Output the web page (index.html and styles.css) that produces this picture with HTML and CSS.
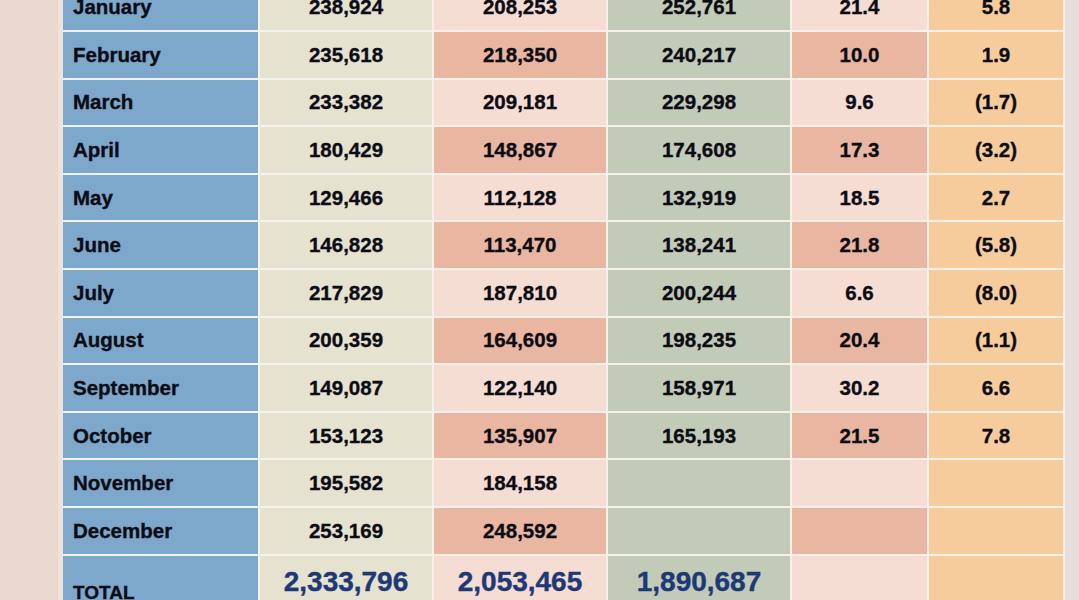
FILE: index.html
```html
<!DOCTYPE html>
<html>
<head>
<meta charset="utf-8">
<link rel="stylesheet" href="styles.css">
</head>
<body>
<div class="page">
  <div class="edge"></div>
  <div class="sheet">
    <div class="m">January</div><div class="c2">238,924</div><div class="c3 lt">208,253</div><div class="c4">252,761</div><div class="c5 lt">21.4</div><div class="c6">5.8</div>
    <div class="m">February</div><div class="c2">235,618</div><div class="c3 dk">218,350</div><div class="c4">240,217</div><div class="c5 dk">10.0</div><div class="c6">1.9</div>
    <div class="m">March</div><div class="c2">233,382</div><div class="c3 lt">209,181</div><div class="c4">229,298</div><div class="c5 lt">9.6</div><div class="c6">(1.7)</div>
    <div class="m">April</div><div class="c2">180,429</div><div class="c3 dk">148,867</div><div class="c4">174,608</div><div class="c5 dk">17.3</div><div class="c6">(3.2)</div>
    <div class="m">May</div><div class="c2">129,466</div><div class="c3 lt">112,128</div><div class="c4">132,919</div><div class="c5 lt">18.5</div><div class="c6">2.7</div>
    <div class="m">June</div><div class="c2">146,828</div><div class="c3 dk">113,470</div><div class="c4">138,241</div><div class="c5 dk">21.8</div><div class="c6">(5.8)</div>
    <div class="m">July</div><div class="c2">217,829</div><div class="c3 lt">187,810</div><div class="c4">200,244</div><div class="c5 lt">6.6</div><div class="c6">(8.0)</div>
    <div class="m">August</div><div class="c2">200,359</div><div class="c3 dk">164,609</div><div class="c4">198,235</div><div class="c5 dk">20.4</div><div class="c6">(1.1)</div>
    <div class="m">September</div><div class="c2">149,087</div><div class="c3 lt">122,140</div><div class="c4">158,971</div><div class="c5 lt">30.2</div><div class="c6">6.6</div>
    <div class="m">October</div><div class="c2">153,123</div><div class="c3 dk">135,907</div><div class="c4">165,193</div><div class="c5 dk">21.5</div><div class="c6">7.8</div>
    <div class="m">November</div><div class="c2">195,582</div><div class="c3 lt">184,158</div><div class="c4"></div><div class="c5 lt"></div><div class="c6"></div>
    <div class="m">December</div><div class="c2">253,169</div><div class="c3 dk">248,592</div><div class="c4"></div><div class="c5 dk"></div><div class="c6"></div>
    <div class="m total-label">TOTAL</div><div class="c2 total">2,333,796</div><div class="c3 lt total">2,053,465</div><div class="c4 total">1,890,687</div><div class="c5 lt"></div><div class="c6"></div>
  </div>
</div>
</body>
</html>
```
FILE: styles.css
```css
html, body {
  margin: 0;
  padding: 0;
  background: #e7dcd8;
  overflow: hidden;
}
.page {
  display: flex;
  height: 600px;
  background: linear-gradient(to right, #ead8d0 0, #ead8d0 1063px, #e7dedb 1063px);
}
.edge {
  width: 58px;
  flex: none;
}
.sheet {
  flex: none;
  margin-top: -15.6px;
  padding-left: 5px;
  background: linear-gradient(to right, #efe2dc 0, #efe2dc 5px, #f6f1ea 5px);
  padding-right: 2px;
  display: grid;
  grid-template-columns: 195px 172px 172px 182px 135px 134px;
  grid-auto-rows: 45.6px;
  column-gap: 2px;
  row-gap: 2px;
  align-self: flex-start;
  font-family: "Liberation Sans", Arial, sans-serif;
  font-weight: bold;
  font-size: 20.5px;
  color: #0c0c14;
  -webkit-text-stroke: 0.35px #0c0c14;
}
.sheet > div {
  display: flex;
  align-items: center;
  justify-content: center;
  box-sizing: border-box;
}
.sheet > .m {
  justify-content: flex-start;
  padding-left: 10px;
  background: #7ea7cc;
}
.c2 { background: #e5e2d0; }
.c4 { background: #c2cbb8; }
.c6 { background: #f6cc9c; }
.lt { background: #f5ddd3; }
.dk { background: #e9b6a1; }
.sheet > .total {
  height: 70px;
  align-items: flex-start;
  padding-top: 10px;
  font-size: 28px;
  color: #1d3977;
  -webkit-text-stroke: 0.4px #1d3977;
}
.sheet > .total-label {
  align-items: flex-start;
  padding-top: 26px;
  height: 70px;
  font-size: 19px;
}
```
